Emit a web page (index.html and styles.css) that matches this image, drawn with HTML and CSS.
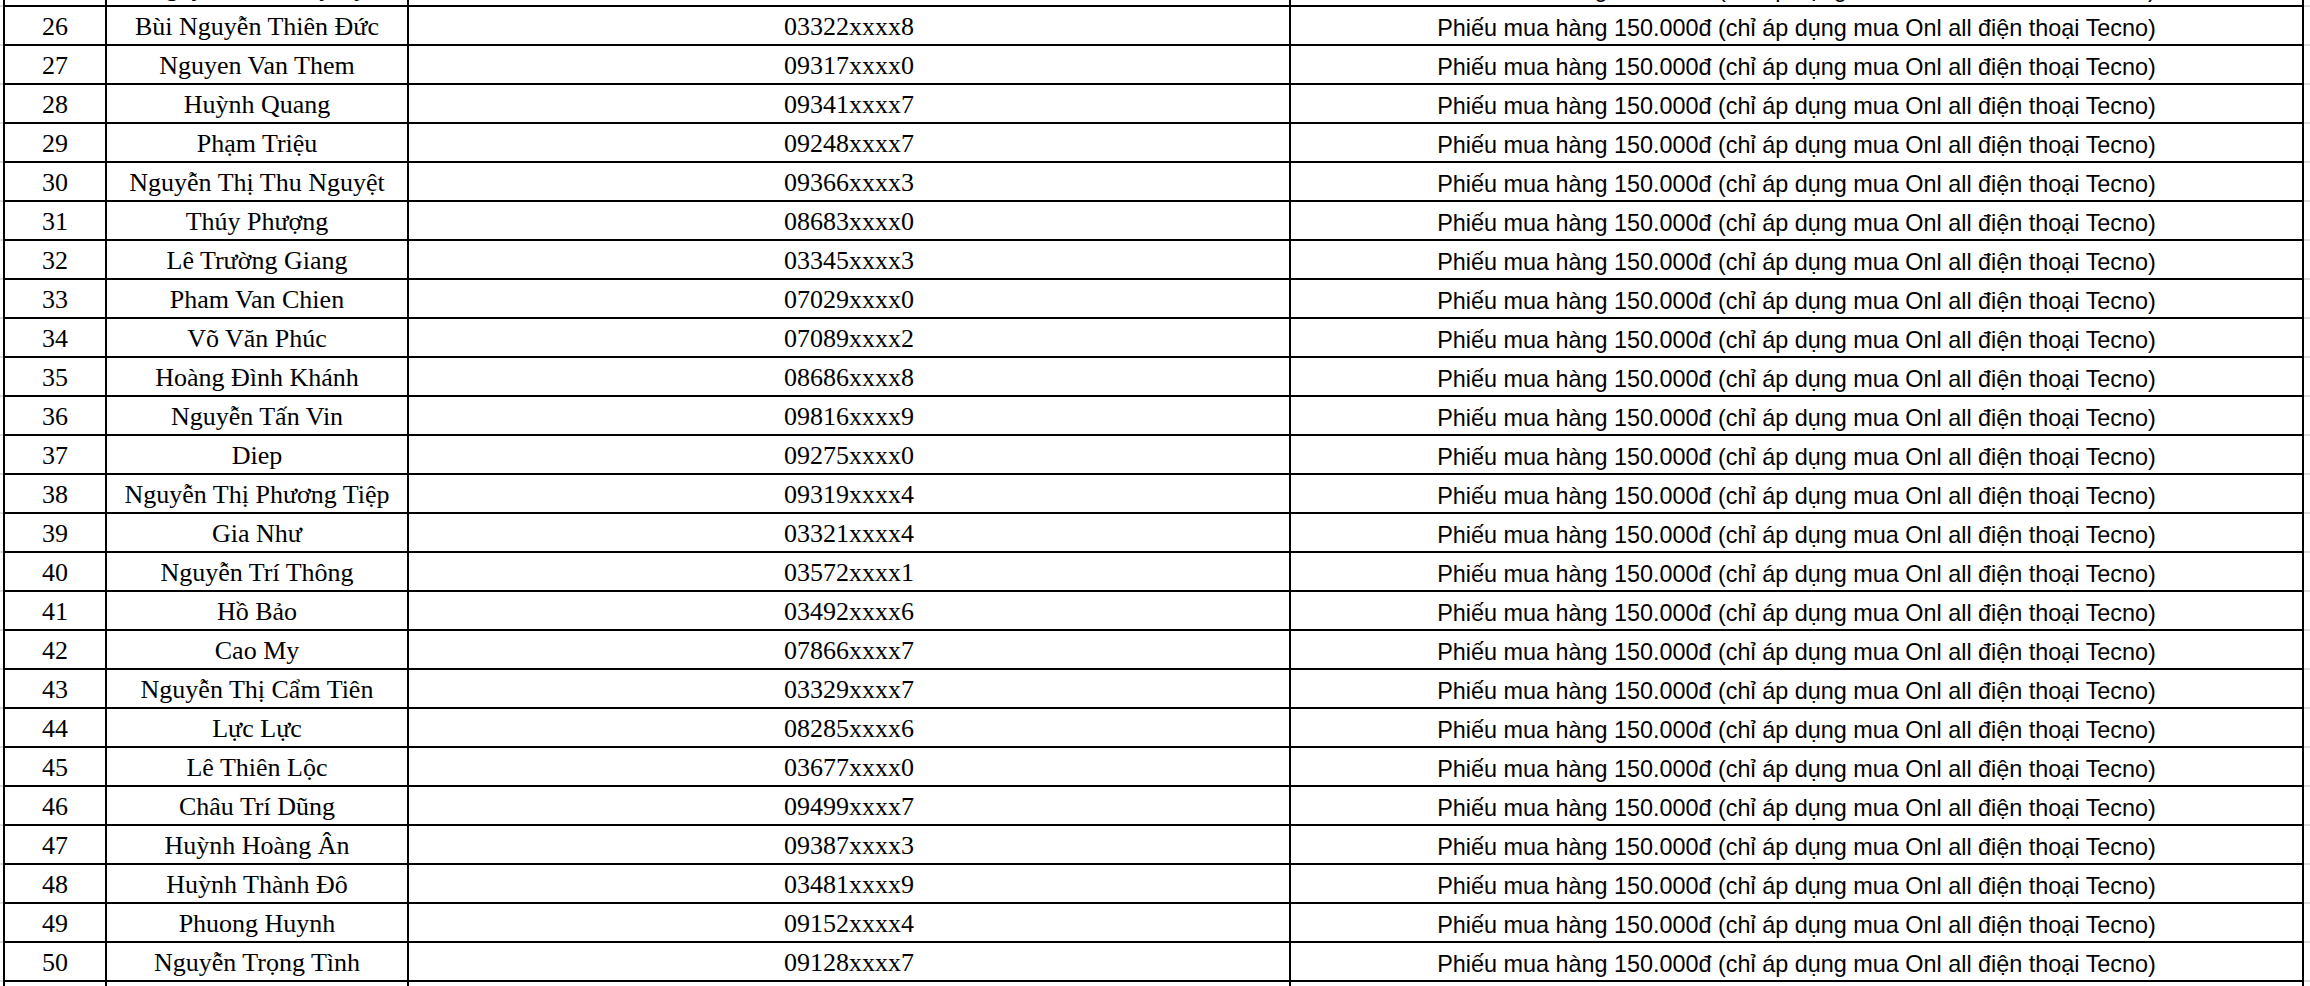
FILE: index.html
```html
<!DOCTYPE html>
<html lang="vi">
<head>
<meta charset="utf-8">
<title>Danh sách khách hàng trúng thưởng</title>
<link rel="stylesheet" href="styles.css">
</head>
<body>
<div class="sheet">
<table class="list">
<colgroup><col class="c-no"><col class="c-name"><col class="c-phone"><col class="c-prize"></colgroup>
<tbody>
<tr><td>25</td><td class="name">Nguyễn Thị Thúy Vy</td><td class="phone">09235xxxx1</td><td class="prize">Phiếu mua hàng 150.000đ (chỉ áp dụng mua Onl all điện thoại Tecno)</td></tr>
<tr><td>26</td><td class="name">Bùi Nguyễn Thiên Đức</td><td class="phone">03322xxxx8</td><td class="prize">Phiếu mua hàng 150.000đ (chỉ áp dụng mua Onl all điện thoại Tecno)</td></tr>
<tr><td>27</td><td class="name">Nguyen Van Them</td><td class="phone">09317xxxx0</td><td class="prize">Phiếu mua hàng 150.000đ (chỉ áp dụng mua Onl all điện thoại Tecno)</td></tr>
<tr><td>28</td><td class="name">Huỳnh Quang</td><td class="phone">09341xxxx7</td><td class="prize">Phiếu mua hàng 150.000đ (chỉ áp dụng mua Onl all điện thoại Tecno)</td></tr>
<tr><td>29</td><td class="name">Phạm Triệu</td><td class="phone">09248xxxx7</td><td class="prize">Phiếu mua hàng 150.000đ (chỉ áp dụng mua Onl all điện thoại Tecno)</td></tr>
<tr><td>30</td><td class="name">Nguyễn Thị Thu Nguyệt</td><td class="phone">09366xxxx3</td><td class="prize">Phiếu mua hàng 150.000đ (chỉ áp dụng mua Onl all điện thoại Tecno)</td></tr>
<tr><td>31</td><td class="name">Thúy Phượng</td><td class="phone">08683xxxx0</td><td class="prize">Phiếu mua hàng 150.000đ (chỉ áp dụng mua Onl all điện thoại Tecno)</td></tr>
<tr><td>32</td><td class="name">Lê Trường Giang</td><td class="phone">03345xxxx3</td><td class="prize">Phiếu mua hàng 150.000đ (chỉ áp dụng mua Onl all điện thoại Tecno)</td></tr>
<tr><td>33</td><td class="name">Pham Van Chien</td><td class="phone">07029xxxx0</td><td class="prize">Phiếu mua hàng 150.000đ (chỉ áp dụng mua Onl all điện thoại Tecno)</td></tr>
<tr><td>34</td><td class="name">Võ Văn Phúc</td><td class="phone">07089xxxx2</td><td class="prize">Phiếu mua hàng 150.000đ (chỉ áp dụng mua Onl all điện thoại Tecno)</td></tr>
<tr><td>35</td><td class="name">Hoàng Đình Khánh</td><td class="phone">08686xxxx8</td><td class="prize">Phiếu mua hàng 150.000đ (chỉ áp dụng mua Onl all điện thoại Tecno)</td></tr>
<tr><td>36</td><td class="name">Nguyễn Tấn Vin</td><td class="phone">09816xxxx9</td><td class="prize">Phiếu mua hàng 150.000đ (chỉ áp dụng mua Onl all điện thoại Tecno)</td></tr>
<tr><td>37</td><td class="name">Diep</td><td class="phone">09275xxxx0</td><td class="prize">Phiếu mua hàng 150.000đ (chỉ áp dụng mua Onl all điện thoại Tecno)</td></tr>
<tr><td>38</td><td class="name">Nguyễn Thị Phương Tiệp</td><td class="phone">09319xxxx4</td><td class="prize">Phiếu mua hàng 150.000đ (chỉ áp dụng mua Onl all điện thoại Tecno)</td></tr>
<tr><td>39</td><td class="name">Gia Như</td><td class="phone">03321xxxx4</td><td class="prize">Phiếu mua hàng 150.000đ (chỉ áp dụng mua Onl all điện thoại Tecno)</td></tr>
<tr><td>40</td><td class="name">Nguyễn Trí Thông</td><td class="phone">03572xxxx1</td><td class="prize">Phiếu mua hàng 150.000đ (chỉ áp dụng mua Onl all điện thoại Tecno)</td></tr>
<tr><td>41</td><td class="name">Hồ Bảo</td><td class="phone">03492xxxx6</td><td class="prize">Phiếu mua hàng 150.000đ (chỉ áp dụng mua Onl all điện thoại Tecno)</td></tr>
<tr><td>42</td><td class="name">Cao My</td><td class="phone">07866xxxx7</td><td class="prize">Phiếu mua hàng 150.000đ (chỉ áp dụng mua Onl all điện thoại Tecno)</td></tr>
<tr><td>43</td><td class="name">Nguyễn Thị Cẩm Tiên</td><td class="phone">03329xxxx7</td><td class="prize">Phiếu mua hàng 150.000đ (chỉ áp dụng mua Onl all điện thoại Tecno)</td></tr>
<tr><td>44</td><td class="name">Lực Lực</td><td class="phone">08285xxxx6</td><td class="prize">Phiếu mua hàng 150.000đ (chỉ áp dụng mua Onl all điện thoại Tecno)</td></tr>
<tr><td>45</td><td class="name">Lê Thiên Lộc</td><td class="phone">03677xxxx0</td><td class="prize">Phiếu mua hàng 150.000đ (chỉ áp dụng mua Onl all điện thoại Tecno)</td></tr>
<tr><td>46</td><td class="name">Châu Trí Dũng</td><td class="phone">09499xxxx7</td><td class="prize">Phiếu mua hàng 150.000đ (chỉ áp dụng mua Onl all điện thoại Tecno)</td></tr>
<tr><td>47</td><td class="name">Huỳnh Hoàng Ân</td><td class="phone">09387xxxx3</td><td class="prize">Phiếu mua hàng 150.000đ (chỉ áp dụng mua Onl all điện thoại Tecno)</td></tr>
<tr><td>48</td><td class="name">Huỳnh Thành Đô</td><td class="phone">03481xxxx9</td><td class="prize">Phiếu mua hàng 150.000đ (chỉ áp dụng mua Onl all điện thoại Tecno)</td></tr>
<tr><td>49</td><td class="name">Phuong Huynh</td><td class="phone">09152xxxx4</td><td class="prize">Phiếu mua hàng 150.000đ (chỉ áp dụng mua Onl all điện thoại Tecno)</td></tr>
<tr><td>50</td><td class="name">Nguyễn Trọng Tình</td><td class="phone">09128xxxx7</td><td class="prize">Phiếu mua hàng 150.000đ (chỉ áp dụng mua Onl all điện thoại Tecno)</td></tr>
<tr><td></td><td class="name"></td><td class="phone"></td><td class="prize"></td></tr>
</tbody>
</table>
</div>
</body>
</html>
```

FILE: styles.css
```css
html, body {
  margin: 0;
  padding: 0;
  background: #fff;
}

.sheet {
  height: 986px;
  overflow: hidden;
  background: repeating-linear-gradient(to bottom, transparent 0 5px, #dcdcdc 5px 7px, transparent 7px 39px);
}

.list {
  border-collapse: collapse;
  table-layout: fixed;
  width: 2301px;
  margin: -34px 0 0 3px;
  background: #fff;
  color: #000;
}

.c-no { width: 102px; }
.c-name { width: 302px; }
.c-phone { width: 882px; }
.c-prize { width: 1013px; }

.list tr {
  height: 39px;
}

.list td {
  border: 2px solid #000;
  padding: 0 4px 2px;
  text-align: center;
  vertical-align: bottom;
  white-space: nowrap;
  overflow: hidden;
  font-family: "Liberation Serif", "Times New Roman", serif;
  font-size: 26px;
  line-height: normal;
}

.list td.prize {
  font-family: "Liberation Sans", Arial, Helvetica, sans-serif;
  font-size: 23.4px;
}
```
